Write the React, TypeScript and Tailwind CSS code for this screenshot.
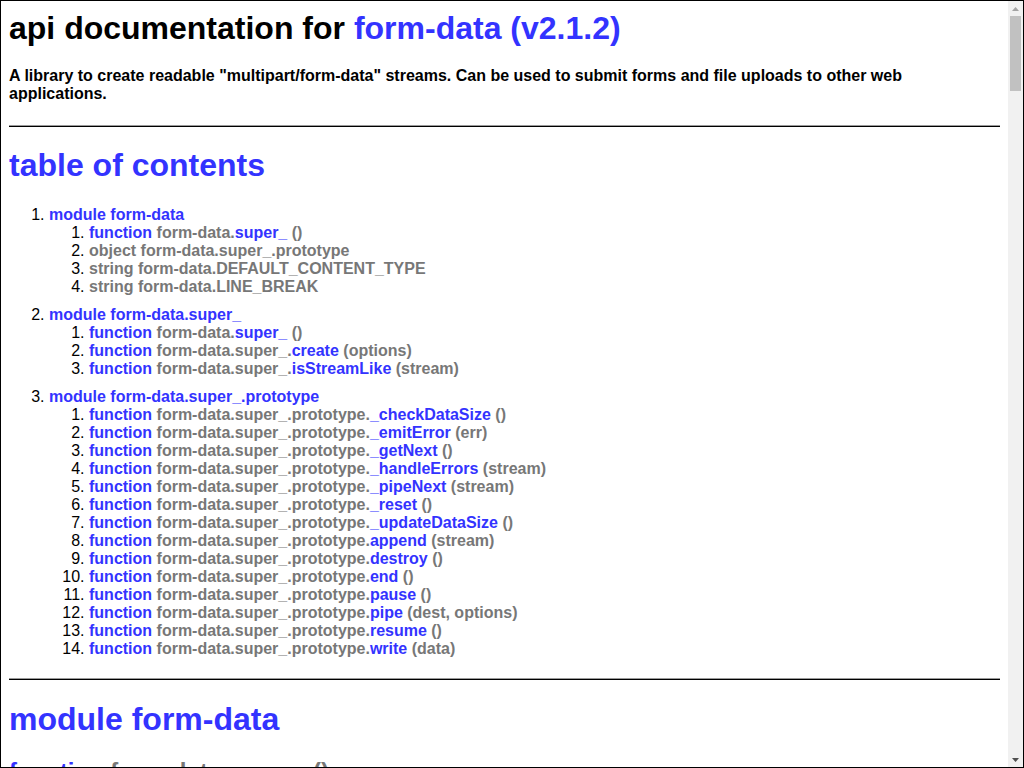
type Entry = {
  kind: 'function' | 'object' | 'string';
  prefix: string;
  name?: string;
  args?: string;
};

type Module = {
  name: string;
  entries: Entry[];
};

const proto = 'form-data.super_.prototype.';

const modules: Module[] = [
  {
    name: 'form-data',
    entries: [
      { kind: 'function', prefix: 'form-data.', name: 'super_', args: '()' },
      { kind: 'object', prefix: 'form-data.super_.prototype' },
      { kind: 'string', prefix: 'form-data.DEFAULT_CONTENT_TYPE' },
      { kind: 'string', prefix: 'form-data.LINE_BREAK' },
    ],
  },
  {
    name: 'form-data.super_',
    entries: [
      { kind: 'function', prefix: 'form-data.', name: 'super_', args: '()' },
      { kind: 'function', prefix: 'form-data.super_.', name: 'create', args: '(options)' },
      { kind: 'function', prefix: 'form-data.super_.', name: 'isStreamLike', args: '(stream)' },
    ],
  },
  {
    name: 'form-data.super_.prototype',
    entries: [
      { kind: 'function', prefix: proto, name: '_checkDataSize', args: '()' },
      { kind: 'function', prefix: proto, name: '_emitError', args: '(err)' },
      { kind: 'function', prefix: proto, name: '_getNext', args: '()' },
      { kind: 'function', prefix: proto, name: '_handleErrors', args: '(stream)' },
      { kind: 'function', prefix: proto, name: '_pipeNext', args: '(stream)' },
      { kind: 'function', prefix: proto, name: '_reset', args: '()' },
      { kind: 'function', prefix: proto, name: '_updateDataSize', args: '()' },
      { kind: 'function', prefix: proto, name: 'append', args: '(stream)' },
      { kind: 'function', prefix: proto, name: 'destroy', args: '()' },
      { kind: 'function', prefix: proto, name: 'end', args: '()' },
      { kind: 'function', prefix: proto, name: 'pause', args: '()' },
      { kind: 'function', prefix: proto, name: 'pipe', args: '(dest, options)' },
      { kind: 'function', prefix: proto, name: 'resume', args: '()' },
      { kind: 'function', prefix: proto, name: 'write', args: '(data)' },
    ],
  },
];

function Rule({ className = '' }: { className?: string }) {
  return <hr className={`border-0 border-t border-b border-t-[#9a9a9a] border-b-black ${className}`} />;
}

function TocEntry({ entry }: { entry: Entry }) {
  if (entry.kind !== 'function') {
    return (
      <li>
        <span className="font-bold text-[#777]">
          {entry.kind} {entry.prefix}
        </span>
      </li>
    );
  }
  return (
    <li>
      <a href="#" className="font-bold text-[#33f]">
        function
      </a>{' '}
      <span className="font-bold text-[#777]">{entry.prefix}</span>
      <a href="#" className="font-bold text-[#33f]">
        {entry.name}
      </a>{' '}
      <span className="font-bold text-[#777]">{entry.args}</span>
    </li>
  );
}

function EntryDetail({ entry }: { entry: Entry }) {
  const label = entry.kind === 'function' ? `${entry.prefix}${entry.name} ${entry.args}` : entry.prefix;
  return (
    <div className="mt-5">
      <h3 className="text-[24px] font-bold leading-[28px]">
        <a href="#" className="text-[#33f]">
          {entry.kind}
        </a>{' '}
        <span className="text-[#777]">{label}</span>
      </h3>
      <div className="mt-4 text-[16px] font-bold leading-[18px] text-[#555]">description and source-code</div>
      <pre className="mt-2 whitespace-pre-wrap border border-[#555] bg-[#eef] p-[5px] font-['Liberation_Mono',monospace] text-[13px] leading-[15px] text-[#777]">
        {`${label}\n    // ...`}
      </pre>
    </div>
  );
}

// drawn stand-in for the page's classic scrollbar, scrolled to the top
function Scrollbar() {
  return (
    <div className="flex w-[15px] shrink-0 flex-col bg-[#f1f1f1]">
      <div className="flex h-[15px] items-center justify-center">
        <svg width="7" height="4" viewBox="0 0 7 4">
          <polygon points="3.5,0 7,4 0,4" fill="#a3a3a3" />
        </svg>
      </div>
      <div className="flex-1">
        <div className="mx-[2px] h-[75px] bg-[#c1c1c1]" />
      </div>
      <div className="flex h-[15px] items-center justify-center">
        <svg width="7" height="4" viewBox="0 0 7 4">
          <polygon points="0,0 7,0 3.5,4" fill="#505050" />
        </svg>
      </div>
    </div>
  );
}

export default function App() {
  return (
    <div className="flex h-screen border border-black bg-white font-['Liberation_Sans',Arial,sans-serif] text-black">
      <div className="min-w-0 flex-1 overflow-hidden px-2 pt-[9px]">
        <h1 className="text-[32px] font-bold leading-[37px]">
          api documentation for{' '}
          <a href="#" className="text-[#33f]">
            form-data (v2.1.2)
          </a>
        </h1>
        <div className="mt-[20px] text-[16px] font-bold leading-[18px]">
          A library to create readable "multipart/form-data" streams. Can be used to submit forms and file uploads
          to other web applications.
        </div>

        <Rule className="mt-[22px]" />

        <h2 className="mt-[20px] text-[32px] font-bold leading-[37px] text-[#33f]">table of contents</h2>
        <ol className="mt-[22px] list-decimal pl-10 text-[16px] leading-[18px]">
          {modules.map((m, idx) => (
            <li key={m.name} className={idx > 0 ? 'mt-[10px]' : ''}>
              <a href="#" className="font-bold text-[#33f]">
                module {m.name}
              </a>
              <ol className="list-decimal pl-10">
                {m.entries.map((e, i) => (
                  <TocEntry key={i} entry={e} />
                ))}
              </ol>
            </li>
          ))}
        </ol>

        {modules.map((m, idx) => (
          <section key={m.name}>
            <Rule className={idx === 0 ? 'mt-[20px]' : 'mt-8'} />
            <h2 className="mt-[21px] text-[32px] font-bold leading-[37px] text-[#33f]">module {m.name}</h2>
            {m.entries.map((e, i) => (
              <EntryDetail key={i} entry={e} />
            ))}
          </section>
        ))}
      </div>
      <Scrollbar />
    </div>
  );
}
